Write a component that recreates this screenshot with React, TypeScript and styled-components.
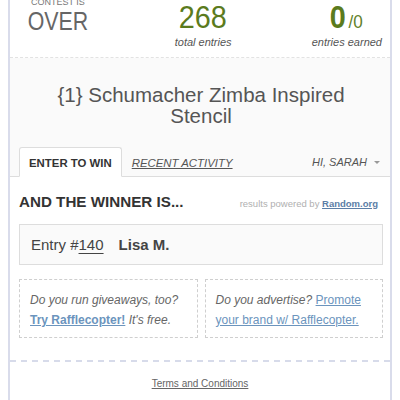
import styled, { createGlobalStyle } from "styled-components";

const GlobalStyle = createGlobalStyle`
  body {
    margin: 0;
    background: #ffffff;
    font-family: "Liberation Sans", Arial, sans-serif;
  }
`;

const Widget = styled.div`
  margin: 0 8px;
  border-left: 2px solid #d9dceb;
  border-right: 2px solid #d9dceb;
  background: #ffffff;
`;

const Header = styled.div`
  display: flex;
  justify-content: space-between;
  align-items: flex-start;
  padding: 1px 8px 8px 11px;
  border-bottom: 1px dashed #e2e2e2;
`;

const Stat = styled.div<{ $shift?: number }>`
  display: flex;
  flex-direction: column;
  align-items: center;
  margin-top: ${(p) => p.$shift ?? 0}px;
`;

const SmallCaps = styled.div`
  font-size: 9px;
  line-height: 10px;
  color: #777;
  text-transform: uppercase;
`;

const Status = styled.div`
  font-size: 26px;
  line-height: 26px;
  color: #666;
  margin-top: 1px;
  transform: scaleX(0.82);
`;

const BigNumber = styled.div`
  font-size: 32px;
  line-height: 32px;
  color: #5b7b1d;
  transform: scaleX(0.9);
`;

const Bold = styled.span`
  font-weight: bold;
`;

const Slash = styled.span`
  font-size: 19px;
  line-height: 1;
  margin-left: 3px;
  color: #62812a;
`;

const Caption = styled.div`
  margin-top: 2px;
  font-size: 11px;
  line-height: 14px;
  font-style: italic;
  color: #555;
`;

const TitleArea = styled.div`
  background: #fafafa;
  padding: 26px 7px 0 9px;
`;

const Title = styled.h1`
  margin: 0 0 21px;
  font-size: 20.5px;
  line-height: 21px;
  font-weight: normal;
  text-align: center;
  color: #555;
`;

const Tabs = styled.div`
  display: flex;
  align-items: flex-end;
  border-bottom: 1px solid #dddddd;
  margin: 0 -7px 0 -9px;
  padding: 0 9px 0 9px;
`;

const Tab = styled.div<{ $active?: boolean }>`
  padding: 8px 9px 6px;
  margin-bottom: -1px;
  font-size: 11.4px;
  line-height: 14px;
  font-weight: ${(p) => (p.$active ? "bold" : "normal")};
  font-style: ${(p) => (p.$active ? "normal" : "italic")};
  text-decoration: ${(p) => (p.$active ? "none" : "underline")};
  color: ${(p) => (p.$active ? "#333" : "#555")};
  background: ${(p) => (p.$active ? "#ffffff" : "transparent")};
  border: 1px solid ${(p) => (p.$active ? "#dddddd" : "transparent")};
  border-bottom-color: ${(p) => (p.$active ? "#ffffff" : "transparent")};
  border-radius: 3px 3px 0 0;
`;

const UserMenu = styled.div`
  margin-left: auto;
  padding: 8px 1px 7px;
  display: flex;
  align-items: center;
  gap: 7px;
  font-size: 11px;
  line-height: 14px;
  font-style: italic;
  color: #555;
`;

const Caret = styled.span`
  width: 0;
  height: 0;
  border-left: 3px solid transparent;
  border-right: 3px solid transparent;
  border-top: 3px solid #999;
`;

const Content = styled.div`
  padding: 16px 7px 22px 9px;
`;

const WinnerHead = styled.div`
  display: flex;
  justify-content: space-between;
  align-items: baseline;
  margin-bottom: 13px;
`;

const WinnerTitle = styled.div`
  font-size: 15.2px;
  line-height: 18px;
  font-weight: bold;
  color: #333;
`;

const PoweredBy = styled.div`
  font-size: 9.5px;
  color: #b0b0b0;
  margin-right: 5px;
`;

const SourceLink = styled.a`
  font-weight: bold;
  color: #5b7ea6;
  text-decoration: underline;
`;

const EntryBox = styled.div`
  display: flex;
  gap: 15px;
  padding: 11px 11px 10px;
  background: #fafafa;
  border: 1px solid #dddddd;
  font-size: 15px;
  line-height: 18px;
  color: #444;
`;

const EntryNumber = styled.span`
  text-decoration: underline;
  text-underline-offset: 3px;
`;

const Promos = styled.div`
  display: grid;
  grid-template-columns: 1fr 1fr;
  gap: 7px;
  margin-top: 14px;
`;

const Promo = styled.div`
  padding: 10px 9px 7px 10px;
  border: 1px dashed #cfcfcf;
  font-size: 12px;
  line-height: 20px;
  font-style: italic;
  color: #666;
`;

const PromoLink = styled.a<{ $strong?: boolean }>`
  font-style: normal;
  font-weight: ${(p) => (p.$strong ? "bold" : "normal")};
  color: #6b94bd;
  text-decoration: underline;
`;

const Separator = styled.div`
  height: 2px;
  background: repeating-linear-gradient(
    to right,
    #d7dbea 0 6px,
    transparent 6px 11px
  );
`;

const Footer = styled.div`
  padding: 11px 0 10px;
  text-align: center;
  border-bottom: 1px solid #e6e6e6;
`;

const Terms = styled.a`
  font-size: 10px;
  line-height: 12px;
  color: #666;
  text-decoration: underline;
`;

const Tail = styled.div`
  height: 20px;
`;

export default function App() {
  return (
    <>
      <GlobalStyle />
      <Widget>
        <Header>
          <Stat $shift={-4}>
            <SmallCaps>Contest is</SmallCaps>
            <Status>OVER</Status>
          </Stat>
          <Stat>
            <BigNumber>268</BigNumber>
            <Caption>total entries</Caption>
          </Stat>
          <Stat>
            <BigNumber>
              <Bold>0</Bold>
              <Slash>/0</Slash>
            </BigNumber>
            <Caption>entries earned</Caption>
          </Stat>
        </Header>
        <TitleArea>
          <Title>
            {"{1} Schumacher Zimba Inspired"}
            <br />
            Stencil
          </Title>
          <Tabs>
            <Tab $active>ENTER TO WIN</Tab>
            <Tab>RECENT ACTIVITY</Tab>
            <UserMenu>
              HI, SARAH <Caret />
            </UserMenu>
          </Tabs>
        </TitleArea>
        <Content>
          <WinnerHead>
            <WinnerTitle>AND THE WINNER IS...</WinnerTitle>
            <PoweredBy>
              results powered by <SourceLink>Random.org</SourceLink>
            </PoweredBy>
          </WinnerHead>
          <EntryBox>
            <span>
              Entry #<EntryNumber>140</EntryNumber>
            </span>
            <Bold>Lisa M.</Bold>
          </EntryBox>
          <Promos>
            <Promo>
              Do you run giveaways, too?
              <br />
              <PromoLink $strong>Try Rafflecopter!</PromoLink> It's free.
            </Promo>
            <Promo>
              Do you advertise? <PromoLink>Promote</PromoLink>
              <br />
              <PromoLink>your brand w/ Rafflecopter.</PromoLink>
            </Promo>
          </Promos>
        </Content>
        <Separator />
        <Footer>
          <Terms>Terms and Conditions</Terms>
        </Footer>
        <Tail />
      </Widget>
    </>
  );
}
